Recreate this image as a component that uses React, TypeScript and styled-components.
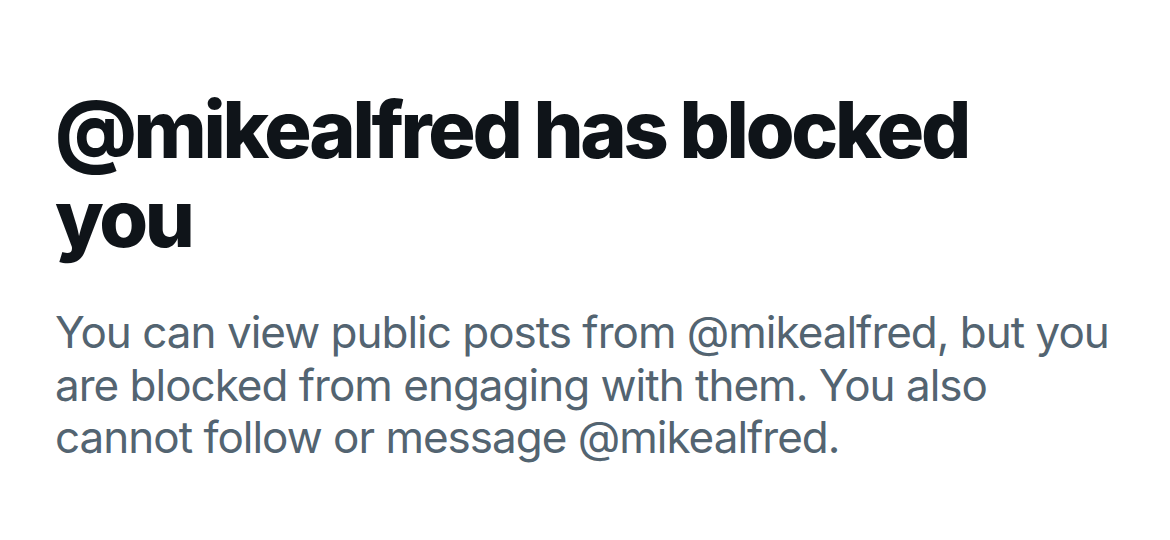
import React from 'react';
import styled, { createGlobalStyle } from 'styled-components';

const GlobalStyle = createGlobalStyle`
  html, body {
    margin: 0;
    padding: 0;
    background: #ffffff;
  }
  body {
    font-family: Inter, "Noto Sans", "Liberation Sans", sans-serif;
    -webkit-font-smoothing: antialiased;
  }
`;

const Page = styled.div`
  width: 1170px;
  height: 540px;
  box-sizing: border-box;
  padding: 85px 0 0 55px;
  background: #ffffff;
  overflow: hidden;
`;

const Content = styled.div`
  width: 1080px;
  display: flex;
  flex-direction: column;
  gap: 43px;
`;

const Title = styled.h1`
  margin: 0;
  max-width: 1000px;
  font-size: 79px;
  line-height: 89px;
  font-weight: 800;
  letter-spacing: -3.3px;
  color: #0f1419;
`;

const Message = styled.p`
  margin: 0;
  font-size: 44px;
  line-height: 52.5px;
  font-weight: 400;
  letter-spacing: -1px;
  color: #536471;
`;

const App: React.FC = () => {
  const handle = '@mikealfred';

  return (
    <>
      <GlobalStyle />
      <Page>
        <Content>
          <Title>{handle} has blocked you</Title>
          <Message>
            You can view public posts from {handle}, but you are blocked from
            engaging with them. You also cannot follow or message {handle}.
          </Message>
        </Content>
      </Page>
    </>
  );
};

export default App;
